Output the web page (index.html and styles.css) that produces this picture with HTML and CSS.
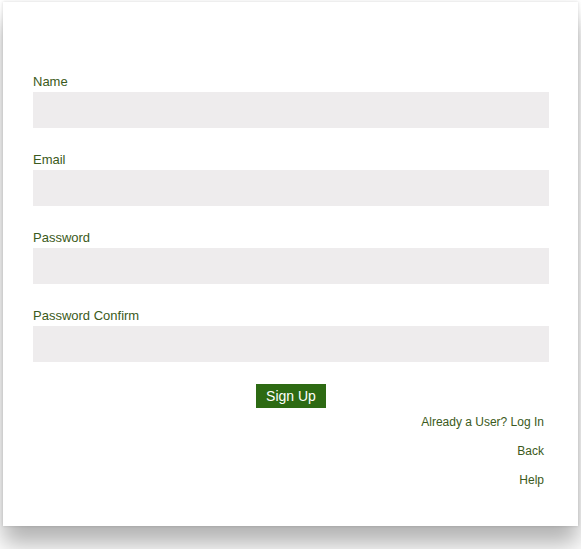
FILE: index.html
```html
<!DOCTYPE html>
<html>
<head>
<meta charset="utf-8">
<link rel="stylesheet" href="styles.css">
</head>
<body>
<div class="card">
  <form class="form">
    <div class="field">
      <label class="label">Name</label>
      <div class="input"></div>
    </div>
    <div class="field">
      <label class="label">Email</label>
      <div class="input"></div>
    </div>
    <div class="field">
      <label class="label">Password</label>
      <div class="input"></div>
    </div>
    <div class="field field-last">
      <label class="label">Password Confirm</label>
      <div class="input"></div>
    </div>
    <div class="actions">
      <button type="button" class="btn">Sign Up</button>
    </div>
    <div class="links">
      <a class="link">Already a User? Log In</a>
      <a class="link">Back</a>
      <a class="link">Help</a>
    </div>
  </form>
</div>
</body>
</html>
```

FILE: styles.css
```css
html, body {
  margin: 0;
  padding: 0;
  background: #ffffff;
}
body {
  width: 581px;
  height: 549px;
  overflow: hidden;
  font-family: "Liberation Sans", Arial, sans-serif;
}
.card {
  margin: 2px 3px 0 3px;
  width: 575px;
  height: 524px;
  background: #ffffff;
  box-shadow: 0 18px 22px rgba(0, 0, 0, 0.3), 0 0 3px rgba(0, 0, 0, 0.14);
  box-sizing: border-box;
  padding: 72px 29px 0 30px;
}
.form {
  display: flex;
  flex-direction: column;
}
.field {
  display: flex;
  flex-direction: column;
  margin-bottom: 24px;
}
.field-last {
  margin-bottom: 22px;
}
.label {
  font-size: 13px;
  line-height: 15px;
  color: #3b5a20;
  margin-bottom: 3px;
}
.input {
  height: 36px;
  background: #eeeced;
}
.actions {
  display: flex;
  justify-content: center;
}
.btn {
  border: none;
  margin: 0;
  background: #2d6a13;
  color: #ffffff;
  font-family: "Liberation Sans", Arial, sans-serif;
  font-size: 14px;
  line-height: 24px;
  height: 24px;
  padding: 0 10px;
  cursor: pointer;
}
.links {
  display: flex;
  flex-direction: column;
  align-items: flex-end;
  padding-right: 5px;
  margin-top: 7px;
  gap: 15px;
}
.link {
  font-size: 12px;
  line-height: 14px;
  color: #3b5a20;
}
```
